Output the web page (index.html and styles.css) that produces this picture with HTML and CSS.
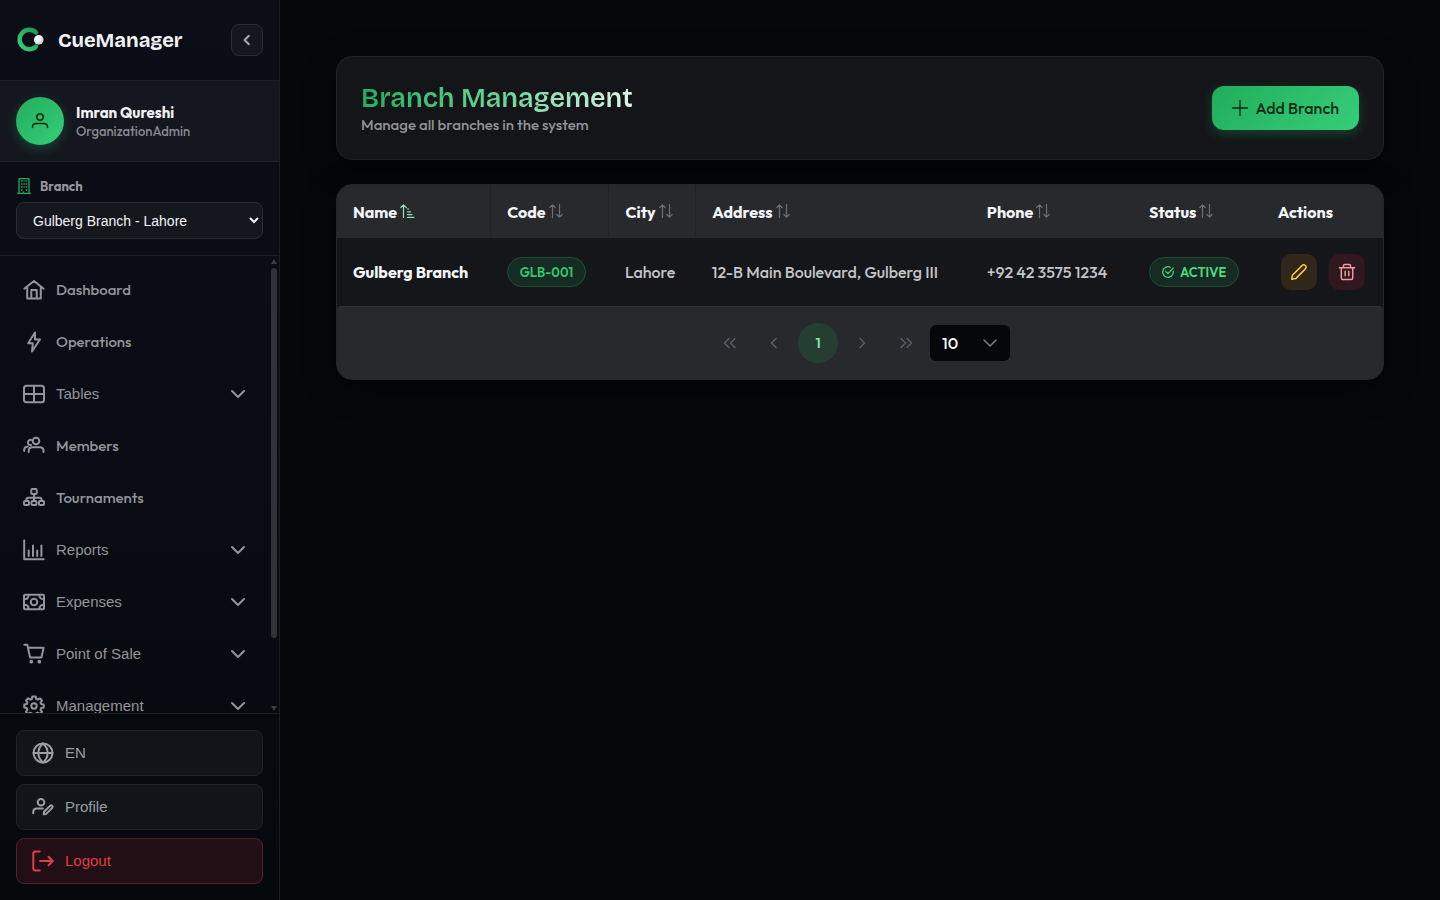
FILE: index.html
```html
<!DOCTYPE html>
<html lang="en">
<head>
<meta charset="utf-8">
<meta name="viewport" content="width=device-width, initial-scale=1">
<title>CueManager - Branch Management</title>
<link rel="stylesheet" href="styles.css">
</head>
<body>
<svg class="defs" aria-hidden="true">
  <defs>
    <linearGradient id="ring" x1="0" y1="1" x2="1" y2="0"><stop offset="0" stop-color="#35cf78"/><stop offset="1" stop-color="#1c9a50"/></linearGradient>
    <radialGradient id="ball" cx=".38" cy=".32" r=".75"><stop offset="0" stop-color="#fff"/><stop offset=".6" stop-color="#e2e5ec"/><stop offset="1" stop-color="#b9bfcc"/></radialGradient>
    <symbol id="chevron" viewBox="0 0 14 14"><path d="M1 4l6 6 6-6"/></symbol>
    <symbol id="sort" viewBox="0 0 14 14"><path d="M3.500 13.500V.8M.8 3.500L3.500.8l2.700 2.700M10.500.5v12.700M7.800 10.500l2.700 2.700 2.700-2.700"/></symbol>
  </defs>
</svg>
<div class="app">
  <aside class="sidebar">
    <div class="brand">
      <svg class="brand-logo" viewBox="-1 -1 31 31" aria-hidden="true"><path d="M19.600 6.700A10 10 0 1 0 19.600 21.300" fill="none" stroke="url(#ring)" stroke-width="4.600" stroke-linecap="round"/><circle cx="22.500" cy="14.300" r="5" fill="url(#ball)"/></svg>
      <span class="brand-name">CueManager</span>
      <button class="collapse" type="button" aria-label="Collapse sidebar"><svg class="icon" viewBox="0 0 10 10"><path d="M6.800.8L2.600 5l4.200 4.200"/></svg></button>
    </div>
    <div class="user">
      <div class="avatar"><svg class="icon" viewBox="0 0 16 16"><circle cx="8" cy="4" r="3.200"/><path d="M.5 14.500v-.4c0-2.100 1.700-3.600 3.800-3.600h7.400c2.100 0 3.800 1.500 3.800 3.600v.4"/></svg></div>
      <div class="user-text"><div class="user-name">Imran Qureshi</div><div class="user-role">OrganizationAdmin</div></div>
    </div>
    <div class="branch">
      <label class="branch-label" for="branch-select"><svg class="icon" viewBox="0 0 16 16"><path d="M3 15.300V.7h10v14.600M1.500 15.300h13"/><path class="windows" d="M5 3h1.500M7.500 3h1.200M9.700 3h1.500M5 6h1.500M7.500 6h1.200M9.700 6h1.500M5 9h1.500M7.500 9h1.200M9.700 9h1.500M5 12h1.500M9.700 12h1.500M7.500 13.500v1.500"/></svg>Branch</label>
      <select class="branch-select" id="branch-select"><option>Gulberg Branch - Lahore</option></select>
    </div>
    <div class="nav-wrap">
      <nav class="nav">
        <a class="nav-item" href="#"><svg class="icon" viewBox="0 0 20 20"><path d="M.3 8.700L10 1l9.700 7.700M3.200 7v11.500h13.600V7M7.300 18.500V10h5.400v8.500"/></svg>Dashboard</a>
        <a class="nav-item" href="#"><svg class="icon" viewBox="0 0 20 20"><path d="M11 .5L4.200 11.300h4.600L8 19.500l8-12h-5z"/></svg>Operations</a>
        <button class="nav-item nav-group" type="button"><svg class="icon" viewBox="0 0 20 20"><rect x="0" y="1.800" width="20" height="16.400" rx="2.500"/><path d="M0 10h20M10 2v16"/></svg>Tables<svg class="caret"><use href="#chevron"/></svg></button>
        <a class="nav-item" href="#"><svg class="icon" viewBox="0 0 20 20"><circle cx="12" cy="5" r="3.300"/><path d="M4.700 16v-1.200c0-2.100 1.500-3.600 3.600-3.600h7.500c2.100 0 3.700 1.500 3.700 3.600V16M7.300 4a2.600 2.600 0 1 0-.2 5M3.800 10.500C1.500 10.700.2 12 .2 14v1"/></svg>Members</a>
        <a class="nav-item" href="#"><svg class="icon" viewBox="0 0 20 20"><rect x="7.300" y="1" width="5.400" height="5" rx="1"/><rect x="0" y="13" width="5" height="4" rx="1"/><rect x="7.500" y="13" width="5" height="4" rx="1"/><rect x="15" y="13" width="5" height="4" rx="1"/><path d="M10 6v7M2.500 13v-1.500c0-1 .6-1.700 1.700-1.700h11.600c1.100 0 1.700.7 1.700 1.700V13"/></svg>Tournaments</a>
        <button class="nav-item nav-group" type="button"><svg class="icon" viewBox="0 0 20 20"><path d="M.2.5v18.800h19.500M4.700 10.500V16M9 5.500V16M13.200 10.500V16M17.400 5.500V16"/></svg>Reports<svg class="caret"><use href="#chevron"/></svg></button>
        <button class="nav-item nav-group" type="button"><svg class="icon" viewBox="0 0 20 20"><rect x="0" y="2.800" width="20" height="14.400" rx="1"/><circle cx="10" cy="10" r="3.300"/><path d="M.3 7.300c2.700 0 4.300-1.700 4.300-4.300M19.700 7.300c-2.700 0-4.300-1.700-4.300-4.300M.3 12.700c2.700 0 4.300 1.700 4.300 4.300M19.700 12.700c-2.700 0-4.300 1.700-4.300 4.300"/></svg>Expenses<svg class="caret"><use href="#chevron"/></svg></button>
        <button class="nav-item nav-group" type="button"><svg class="icon" viewBox="0 0 20 20"><path d="M.3.8h3l2.800 12.800h11.300l2.200-9.800H4"/><circle class="dot" cx="7.300" cy="17.700" r="1.900"/><circle class="dot" cx="15.300" cy="17.700" r="1.900"/></svg>Point of Sale<svg class="caret"><use href="#chevron"/></svg></button>
        <button class="nav-item nav-group" type="button"><svg class="icon" viewBox="0 0 20 20"><path d="M8.300.5h3.400l.5 2.500 1.700.7L16 2.300 18 4.500l-1.500 2 .7 1.600 2.500.5v3l-2.500.5-.7 1.700 1.500 2.100-2.200 2.200-2.100-1.500-1.600.7-.5 2.400H8.400l-.5-2.400-1.700-.7-2.100 1.500L2 15.900l1.400-2.100-.6-1.700L.3 11.600v-3l2.500-.5.6-1.700L2 4.400l2.200-2.200 2 1.500L7.800 3z"/><circle cx="10" cy="10" r="2.700"/></svg>Management<svg class="caret"><use href="#chevron"/></svg></button>
      </nav>
      <div class="scrollbar" aria-hidden="true"><i class="arrow-up"></i><i class="thumb"></i><i class="arrow-down"></i></div>
    </div>
    <div class="side-footer">
      <button class="foot-btn" type="button"><svg class="icon" viewBox="0 0 20 20"><circle cx="10" cy="10" r="9.500"/><path d="M.5 10h19M10 .5C3.800 6 3.800 14 10 19.500M10 .5c6.200 5.500 6.200 13.500 0 19"/></svg>EN</button>
      <button class="foot-btn" type="button"><svg class="icon" viewBox="0 0 20 20"><circle cx="8" cy="5.200" r="3.300"/><path d="M.2 16.200v-.8c0-2.200 1.500-3.900 3.700-3.900h6M10.700 17.300l.3-2.500 6-5.900c1.500-1.300 3.500.5 2.200 2l-6 6z"/></svg>Profile</button>
      <button class="foot-btn logout" type="button"><svg class="icon" viewBox="0 0 20 20"><path d="M6.700.5H2.300C1 .5.3 1.200.3 2.500v15c0 1.300.7 2 2 2h4.400M7 10h12.700M15.500 5.700l4.300 4.300-4.300 4.300"/></svg>Logout</button>
    </div>
  </aside>
  <main class="main">
    <header class="page-head">
      <div>
        <h1 class="title">Branch Management</h1>
        <p class="subtitle">Manage all branches in the system</p>
      </div>
      <button class="add" type="button"><svg class="icon" viewBox="0 0 16 16"><path d="M8 .5v15M.5 8h15"/></svg>Add Branch</button>
    </header>
    <section class="table-card">
      <table class="table">
        <colgroup><col class="c-name"><col class="c-code"><col class="c-city"><col class="c-address"><col class="c-phone"><col class="c-status"><col class="c-actions"></colgroup>
        <thead>
          <tr>
            <th scope="col">Name<svg class="sort sorted" viewBox="0 0 14 14"><path d="M3.500 13.500V.8M.8 3.500L3.500.8l2.700 2.700M7.500 5h1.200M7.500 7.800h3M7.500 10.600h4.500M7.500 13.300h6.500"/></svg></th>
            <th scope="col">Code<svg class="sort"><use href="#sort"/></svg></th>
            <th scope="col">City<svg class="sort"><use href="#sort"/></svg></th>
            <th scope="col">Address<svg class="sort"><use href="#sort"/></svg></th>
            <th scope="col">Phone<svg class="sort"><use href="#sort"/></svg></th>
            <th scope="col">Status<svg class="sort"><use href="#sort"/></svg></th>
            <th scope="col">Actions</th>
          </tr>
        </thead>
        <tbody>
          <tr>
            <td class="strong">Gulberg Branch</td>
            <td><span class="tag">GLB-001</span></td>
            <td>Lahore</td>
            <td>12-B Main Boulevard, Gulberg III</td>
            <td>+92 42 3575 1234</td>
            <td><span class="tag status"><svg class="icon" viewBox="0 0 12 12"><path d="M11.300 5.400V6A5.300 5.300 0 1 1 8.200 1.200M3.800 5.500L6 7.700l5.300-5.800"/></svg>ACTIVE</span></td>
            <td class="actions-cell"><div class="actions">
              <button class="act edit" type="button" aria-label="Edit"><svg class="icon" viewBox="0 0 16 16"><path d="M.8 15.200l.6-4L11.300 1.400c2-1.800 5 1.200 3.300 3.200L4.700 14.600z"/></svg></button>
              <button class="act delete" type="button" aria-label="Delete"><svg class="icon" viewBox="0 0 16 16"><path d="M.4 3.700h15.200M2.300 3.900v10c0 .9.600 1.500 1.500 1.500h8.400c.9 0 1.500-.6 1.500-1.500v-10M4.500 3.500V1.700c0-.7.400-1.100 1.100-1.100h4.800c.7 0 1.100.4 1.100 1.100v1.800M6.200 7.200v4.600M9.800 7.200v4.600"/></svg></button>
            </div></td>
          </tr>
        </tbody>
      </table>
      <div class="pager">
        <button class="page" type="button" disabled aria-label="First page"><svg class="icon" viewBox="0 0 14 12"><path d="M6 1.500L1.500 6 6 10.500M12 1.500L7.500 6l4.500 4.500"/></svg></button>
        <button class="page" type="button" disabled aria-label="Previous page"><svg class="icon" viewBox="0 0 14 12"><path d="M9 1.500L4.500 6 9 10.500"/></svg></button>
        <button class="page current" type="button">1</button>
        <button class="page" type="button" disabled aria-label="Next page"><svg class="icon" viewBox="0 0 14 12"><path d="M5 1.500L9.500 6 5 10.500"/></svg></button>
        <button class="page" type="button" disabled aria-label="Last page"><svg class="icon" viewBox="0 0 14 12"><path d="M2 1.500L6.500 6 2 10.500M8 1.500l4.500 4.500L8 10.500"/></svg></button>
        <div class="rows"><select class="rows-select" aria-label="Rows per page"><option>10</option></select><svg class="caret"><use href="#chevron"/></svg></div>
      </div>
    </section>
  </main>
</div>
</body>
</html>
```
FILE: styles.css
```css
* { box-sizing: border-box; }
body {
  margin: 0;
  background: #06070b;
  color: #f1f2f5;
  font: 500 16px/24px Outfit, Lato, sans-serif;
}
button, select { font: inherit; color: inherit; margin: 0; cursor: pointer; }
svg { flex: none; fill: none; stroke: currentColor; stroke-width: 2; stroke-linecap: round; stroke-linejoin: round; overflow: visible; }
.defs { position: absolute; width: 0; height: 0; }
.app { display: flex; height: 100vh; }

.sidebar {
  display: flex;
  flex-direction: column;
  flex: 0 0 280px;
  border-right: 1px solid #1b1d21;
  background: linear-gradient(#0b0e16, #090c14 50%, #05090c);
}
.brand {
  display: flex;
  align-items: center;
  gap: 12px;
  height: 81px;
  flex: none;
  padding: 0 16px;
  border-bottom: 1px solid #1b1e25;
}
.brand-logo { width: 30px; height: 30px; stroke: none; }
.brand-name { font: 700 20px/28px "Bricolage Grotesque", Inter, sans-serif; }
.collapse {
  display: grid;
  place-items: center;
  width: 32px;
  height: 32px;
  margin-left: auto;
  padding: 0;
  border: 1px solid #2a2d34;
  border-radius: 8px;
  background: #14171e;
  color: #a5a8ae;
}
.collapse .icon { width: 10px; height: 10px; }
.user {
  display: flex;
  align-items: center;
  gap: 12px;
  padding: 16px;
  border-bottom: 1px solid #1e2128;
  background: #14171f;
}
.avatar {
  display: grid;
  place-items: center;
  width: 48px;
  height: 48px;
  border-radius: 50%;
  background: linear-gradient(135deg, #22ad5c, #36ce78);
  box-shadow: 0 4px 12px #22ad5c4d;
  color: #062b16;
}
.avatar .icon { width: 16px; height: 16px; stroke-width: 1.5; }
.user-name { font-size: 15px; font-weight: 700; line-height: 20px; }
.user-role { color: #85888f; font-size: 13px; line-height: 16px; }
.branch {
  display: flex;
  flex-direction: column;
  gap: 8px;
  padding: 16px;
  border-bottom: 1px solid #1b1e24;
}
.branch-label { display: flex; align-items: center; gap: 8px; height: 16px; color: #92959b; font-size: 13px; font-weight: 700; line-height: 16px; }
.branch-label .icon { width: 16px; height: 16px; color: #22a65a; stroke-width: 1.3; }
.windows { stroke-linecap: butt; }
.branch-select {
  width: 100%;
  height: 37px;
  padding: 0 0 0 12px;
  border: 1px solid #2a2d33;
  border-radius: 8px;
  background: #14171e;
  color: #f1f2f5;
  font: 14px "Liberation Sans", Arial, sans-serif;
}
.nav-wrap { position: relative; flex: 1; min-height: 0; }
.nav {
  display: flex;
  flex-direction: column;
  gap: 8px;
  height: 100%;
  padding: 12px 16px 12px 8px;
  overflow-y: auto;
  scrollbar-width: none;
}
.nav-item {
  display: flex;
  align-items: center;
  gap: 12px;
  flex: 0 0 44px;
  padding: 0 18px 0 16px;
  border: 0;
  border-radius: 12px;
  background: none;
  color: #92959a;
  font-size: 15px;
  text-decoration: none;
}
.nav-item .icon, .foot-btn .icon { width: 20px; height: 20px; }
.nav-item .dot { fill: currentColor; stroke: none; }
.nav-group, .foot-btn { font: 15px/24px "Liberation Sans", Arial, sans-serif; }
.caret { width: 14px; height: 14px; margin-left: auto; }
.scrollbar { position: absolute; top: 0; right: 0; bottom: 0; width: 10px; }
.scrollbar i { position: absolute; left: 2px; width: 6px; }
.scrollbar .thumb { top: 12px; height: 81%; border-radius: 4px; background: #303237; }
.arrow-up, .arrow-down { height: 5px; background: #3b3d42; }
.arrow-up { top: 3px; clip-path: polygon(50% 0, 100% 100%, 0 100%); }
.arrow-down { bottom: 2px; clip-path: polygon(0 0, 100% 0, 50% 100%); }
.side-footer {
  display: flex;
  flex-direction: column;
  gap: 8px;
  padding: 16px;
  border-top: 1px solid #1a1d21;
}
.foot-btn {
  display: flex;
  align-items: center;
  gap: 12px;
  height: 46px;
  padding: 0 16px;
  border: 1px solid #1f2327;
  border-radius: 8px;
  background: #111519;
  color: #9c9ea2;
}
.logout { border-color: #57212a; background: #210f15; color: #dd4040; }

.main {
  flex: 1;
  min-width: 0;
  padding: 56px;
  overflow-y: auto;
}
.page-head {
  display: flex;
  align-items: center;
  justify-content: space-between;
  padding: 24px;
  border: 1px solid #222327;
  border-radius: 16px;
  background: #141519;
  box-shadow: 0 8px 32px #0006;
}
.title {
  width: fit-content;
  margin: 0;
  background: linear-gradient(100deg, #22ad5c, #6fd79c 55%, #e2f5ea);
  -webkit-background-clip: text;
  background-clip: text;
  color: transparent;
  font: 600 27px/34px "Bricolage Grotesque", Inter, sans-serif;
}
.subtitle { margin: 0; color: #909297; font-size: 15px; line-height: 20px; }
.add {
  display: flex;
  align-items: center;
  gap: 8px;
  height: 44px;
  padding: 0 20px;
  border: 0;
  border-radius: 12px;
  background: linear-gradient(135deg, #22ad5c, #36ce78);
  box-shadow: 0 4px 12px #22ad5c4d;
  color: #062b16;
}
.add .icon { width: 16px; height: 16px; stroke-width: 1.4; }
.table-card {
  margin-top: 24px;
  border: 1px solid #26272b;
  border-radius: 16px;
  background: #15161a;
  box-shadow: 0 8px 32px #0006;
  overflow: hidden;
}
.table { width: 100%; border-collapse: collapse; table-layout: fixed; }
.c-name { width: 14.7%; }
.c-code { width: 11.3%; }
.c-city { width: 8.3%; }
.c-address { width: 26.3%; }
.c-phone { width: 15.5%; }
.c-status { width: 12.3%; }
.c-actions { width: 11.6%; }
.table th, .table td { padding: 0 16px; text-align: left; white-space: nowrap; }
.table th { height: 53px; background: #28292d; color: #f4f5f7; font-weight: 700; }
.table th:nth-child(-n+3) { border-right: 1px solid #212226; }
.table td { height: 68px; color: #c3c4c7; }
.table .strong { color: #f5f6f8; font-weight: 700; }
.table .actions-cell { padding: 0 12px 0 19px; }
.sort { width: 14px; height: 14px; margin-left: 3px; color: #6d6f76; stroke-width: 1.2; vertical-align: 0; }
.sorted { color: #8fe0b2; }
.tag {
  display: inline-flex;
  align-items: center;
  gap: 6px;
  height: 30px;
  padding: 0 12px;
  border: 1px solid #1b5233;
  border-radius: 15px;
  background: #162b22;
  color: #32c873;
  font-size: 13px;
  font-weight: 600;
  line-height: 16px;
  vertical-align: middle;
}
.status { color: #4ade80; }
.status .icon { width: 12px; height: 12px; stroke-width: 1.2; }
.actions { display: flex; gap: 12px; }
.act { display: grid; place-items: center; width: 36px; height: 36px; padding: 0; border: 0; border-radius: 10px; }
.act .icon { width: 16px; height: 16px; stroke-width: 1.5; }
.edit { background: #302619; color: #facc3c; }
.delete { background: #31171e; color: #f29a9f; }
.pager {
  display: flex;
  align-items: center;
  justify-content: center;
  gap: 4px;
  height: 73px;
  border-top: 1px solid #303135;
  border-radius: 4px 4px 0 0;
  background: #28292d;
}
.page { display: grid; place-items: center; width: 40px; height: 40px; padding: 0; border: 0; border-radius: 50%; background: none; color: #5c5e66; }
.page .icon { width: 14px; height: 12px; stroke-width: 1.5; }
.current { background: #243f31; color: #86e0ad; font-size: 14px; font-weight: 600; }
.rows { position: relative; display: flex; }
.rows-select {
  appearance: none;
  width: 80px;
  height: 36px;
  padding: 0 12px;
  border: 0;
  border-radius: 6px;
  background: #05070b;
  color: #f5f6f8;
}
.rows .caret { position: absolute; top: 11px; right: 13px; color: #7b7d84; stroke-width: 1.5; pointer-events: none; }
```
